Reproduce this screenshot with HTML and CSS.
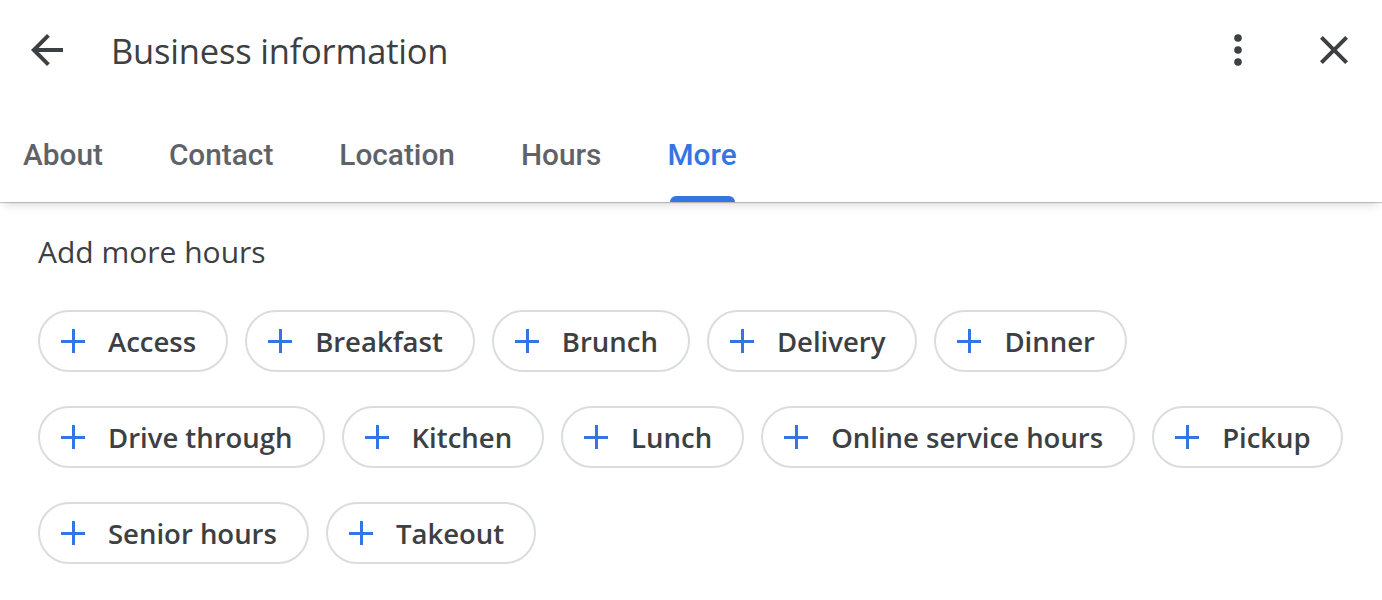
FILE: index.html
```html
<!DOCTYPE html>
<html>
<head>
<meta charset="utf-8">
<link rel="stylesheet" href="styles.css">
</head>
<body>
<div class="panel">
  <header class="topbar">
    <button class="icon-btn back" aria-label="Back">
      <svg width="48" height="48" viewBox="0 0 24 24"><path d="M20 11H7.83l5.59-5.59L12 4l-8 8 8 8 1.41-1.41L7.83 13H20v-2z" fill="#3c4043"/></svg>
    </button>
    <h1 class="title">Business information</h1>
    <div class="spacer"></div>
    <button class="icon-btn more" aria-label="More options">
      <svg width="48" height="48" viewBox="0 0 24 24"><circle cx="12" cy="6" r="1.9" fill="#3c4043"/><circle cx="12" cy="12" r="1.9" fill="#3c4043"/><circle cx="12" cy="18" r="1.9" fill="#3c4043"/></svg>
    </button>
    <button class="icon-btn close" aria-label="Close">
      <svg width="48" height="48" viewBox="0 0 24 24"><path d="M19 6.41L17.59 5 12 10.59 6.41 5 5 6.41 10.59 12 5 17.59 6.41 19 12 13.41 17.59 19 19 17.59 13.41 12z" fill="#3c4043"/></svg>
    </button>
  </header>
  <nav class="tabs">
    <div class="tab">About</div>
    <div class="tab">Contact</div>
    <div class="tab">Location</div>
    <div class="tab">Hours</div>
    <div class="tab active">More</div>
  </nav>
  <main class="content">
    <h2 class="section-title">Add more hours</h2>
    <div class="chips">
      <div class="chip-row">
        <button class="chip"><span class="plus"></span>Access</button>
        <button class="chip"><span class="plus"></span>Breakfast</button>
        <button class="chip"><span class="plus"></span>Brunch</button>
        <button class="chip"><span class="plus"></span>Delivery</button>
        <button class="chip"><span class="plus"></span>Dinner</button>
      </div>
      <div class="chip-row">
        <button class="chip"><span class="plus"></span>Drive through</button>
        <button class="chip"><span class="plus"></span>Kitchen</button>
        <button class="chip"><span class="plus"></span>Lunch</button>
        <button class="chip"><span class="plus"></span>Online service hours</button>
        <button class="chip"><span class="plus"></span>Pickup</button>
      </div>
      <div class="chip-row">
        <button class="chip"><span class="plus"></span>Senior hours</button>
        <button class="chip"><span class="plus"></span>Takeout</button>
      </div>
    </div>
  </main>
</div>
</body>
</html>
```
FILE: styles.css
```css
* { box-sizing: border-box; }
html, body { margin: 0; padding: 0; background: #fff; }
body { font-family: "Open Sans", Roboto, "Liberation Sans", sans-serif; color: #3c4043; }

.panel { width: 1382px; height: 600px; overflow: hidden; }

.topbar {
  display: flex;
  align-items: center;
  height: 100px;
  padding: 0 24px 0 23px;
}
.icon-btn {
  border: 0; background: none; padding: 0; margin: 0;
  width: 48px; height: 48px;
  display: flex; align-items: center; justify-content: center;
  cursor: pointer;
}
.icon-btn svg { display: block; }
.title {
  margin: 0 0 0 40px;
  font-size: 34.5px;
  font-weight: 400;
  letter-spacing: -0.2px;
  color: #3c4043;
}
.spacer { flex: 1; }
.icon-btn.close { margin-left: 48px; }

.tabs {
  display: flex;
  gap: 66px;
  height: 102px;
  padding: 0 0 0 23px;
  position: relative;
  background: #fff;
  box-shadow: 0 1px 1px rgba(0,0,0,0.2), 0 7px 9px -4px rgba(0,0,0,0.14);
  z-index: 1;
}
.tab {
  position: relative;
  font-family: Roboto, "Liberation Sans", sans-serif;
  font-size: 29.8px;
  font-weight: 500;
  color: #5f6368;
  padding-top: 36px;
  line-height: 38px;
  white-space: nowrap;
}
.tab.active { color: #3574e3; }
.tab.active::after {
  content: "";
  position: absolute;
  left: 3px; right: 2px; bottom: 0;
  height: 6px;
  background: #3574e3;
  border-radius: 6px 6px 0 0;
}

.content { padding: 30px 0 0 38px; }
.section-title {
  margin: 0;
  font-size: 30px;
  font-weight: 400;
  line-height: 40px;
  color: #3c4043;
}
.chips {
  display: flex;
  flex-direction: column;
  gap: 34px;
  margin-top: 38px;
}
.chip-row { display: flex; gap: 17px; }
.chip {
  display: flex;
  align-items: center;
  height: 62px;
  padding: 0 30px 0 21px;
  border: 2px solid #dadce0;
  border-radius: 31px;
  background: #fff;
  font-family: "Open Sans", Roboto, sans-serif;
  font-size: 27.5px;
  font-weight: 600;
  color: #3c4043;
  white-space: nowrap;
  cursor: pointer;
}
.plus {
  position: relative;
  width: 24px; height: 24px;
  margin-right: 23px;
  flex: none;
}
.plus::before, .plus::after {
  content: "";
  position: absolute;
  background: #3574e3;
}
.plus::before { left: 0; right: 0; top: 11px; height: 3px; }
.plus::after { top: 0; bottom: 0; left: 11px; width: 3px; }
```
